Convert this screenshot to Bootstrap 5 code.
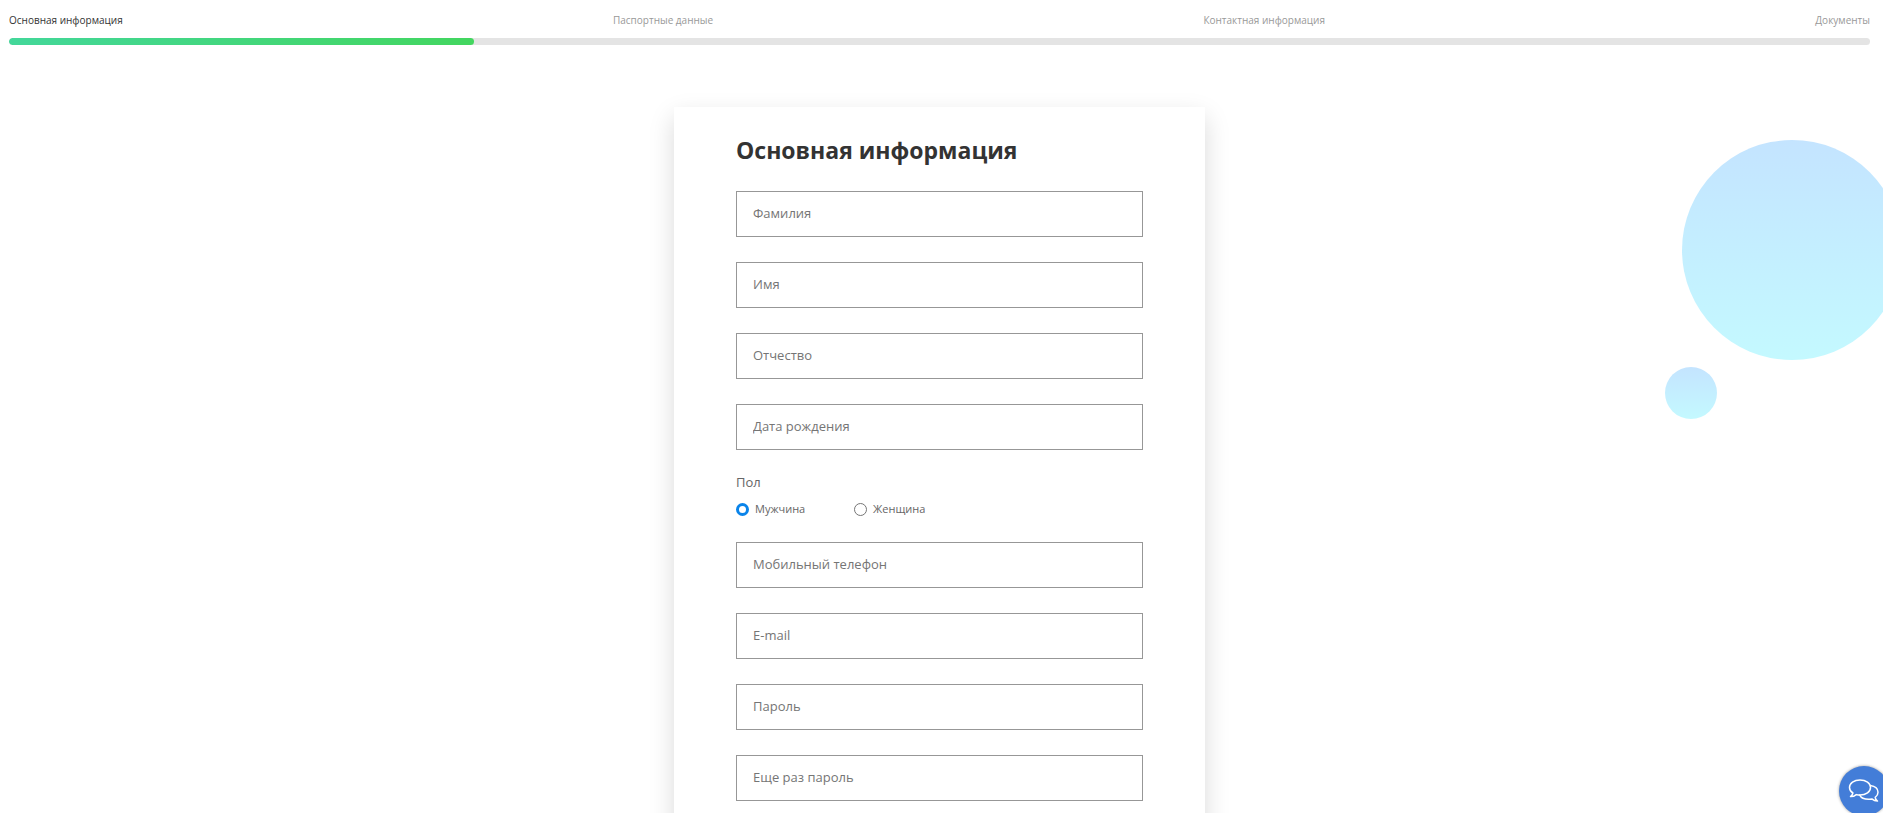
<!DOCTYPE html>
<html lang="ru">
<head>
<meta charset="utf-8">
<meta name="viewport" content="width=device-width, initial-scale=1">
<title>Основная информация</title>
<link href="https://cdn.jsdelivr.net/npm/bootstrap@5.3.0/dist/css/bootstrap.min.css" rel="stylesheet">
<style>
body { font-family: "Open Sans", sans-serif; color: #666; font-size: 13px; line-height: 18px; }
.page { padding: 13px 13px 0 9px; }
.steps { font-size: 10px; line-height: 14px; margin-bottom: 11px; color: #999; }
.steps .active { color: #333; }
.progress { --bs-progress-height: 7px; --bs-progress-bg: #e4e4e4; --bs-progress-border-radius: 4px; }
.progress-bar { border-radius: 4px; background: linear-gradient(90deg, #43d79a, #43d65f); }
.form-panel { max-width: 531px; margin-top: 62px; padding: 26px 62px 62px; background: #fff; box-shadow: 0 10px 24px rgba(0, 0, 0, .15); }
.form-panel h1 { font-size: 23px; line-height: 34px; font-weight: 700; color: #333; margin-bottom: 24px; }
.fields { display: grid; gap: 25px; }
.form-control, .form-control:focus { height: 46px; border: 1px solid #979797; border-radius: 0; padding: 0 16px 2px; font-size: 13px; color: #333; background: #fff; }
.form-control::placeholder { color: #757575; opacity: 1; }
.gender legend { font-size: 13px; line-height: 14px; margin-bottom: 12px; }
.gender .form-check { width: 118px; min-height: 0; font-size: 11px; line-height: 16px; gap: 6px; }
.gender .form-check-input { width: 13px; height: 13px; border: 1px solid #757575; background-image: none; }
.gender .form-check-input:checked { background-color: #fff; border: 3px solid #0a84ea; }
.bubble { border-radius: 50%; background: linear-gradient(#c4e4ff, #c4f9ff); }
.bubble-lg { width: 220px; height: 220px; top: 140px; right: -19px; }
.bubble-sm { width: 52px; height: 52px; top: 367px; right: 166px; }
.chat { width: 50px; height: 50px; right: -6px; bottom: -3px; background: #437dd8; box-shadow: 0 0 3px rgba(0, 0, 0, .4); }
</style>
</head>
<body>
<div class="position-relative vh-100 overflow-hidden">
  <div class="bubble bubble-lg position-absolute"></div>
  <div class="bubble bubble-sm position-absolute"></div>
  <div class="page position-relative">
    <header>
      <div class="steps d-flex justify-content-between">
        <span class="active">Основная информация</span>
        <span>Паспортные данные</span>
        <span>Контактная информация</span>
        <span>Документы</span>
      </div>
      <div class="progress" role="progressbar" aria-label="Основная информация" aria-valuenow="25" aria-valuemin="0" aria-valuemax="100">
        <div class="progress-bar w-25"></div>
      </div>
    </header>
    <main class="form-panel mx-auto">
      <h1>Основная информация</h1>
      <form class="fields">
        <input class="form-control" type="text" placeholder="Фамилия" aria-label="Фамилия">
        <input class="form-control" type="text" placeholder="Имя" aria-label="Имя">
        <input class="form-control" type="text" placeholder="Отчество" aria-label="Отчество">
        <input class="form-control" type="text" placeholder="Дата рождения" aria-label="Дата рождения">
        <fieldset class="gender">
          <legend>Пол</legend>
          <div class="d-flex">
            <div class="form-check d-flex align-items-center p-0 m-0">
              <input class="form-check-input m-0" type="radio" name="gender" id="male" checked>
              <label for="male">Мужчина</label>
            </div>
            <div class="form-check d-flex align-items-center p-0 m-0">
              <input class="form-check-input m-0" type="radio" name="gender" id="female">
              <label for="female">Женщина</label>
            </div>
          </div>
        </fieldset>
        <input class="form-control" type="tel" placeholder="Мобильный телефон" aria-label="Мобильный телефон">
        <input class="form-control" type="email" placeholder="E-mail" aria-label="E-mail">
        <input class="form-control" type="password" placeholder="Пароль" aria-label="Пароль">
        <input class="form-control" type="password" placeholder="Еще раз пароль" aria-label="Еще раз пароль">
      </form>
    </main>
  </div>
  <button class="chat btn rounded-circle border-0 p-0 position-absolute d-flex align-items-center justify-content-center" type="button" aria-label="Чат">
    <svg width="32" height="26" viewBox="0 0 32 26" fill="none" stroke="#fff" stroke-width="1.5" stroke-linejoin="round" stroke-linecap="round">
      <path d="M12 2C6 2 1.500 5.300 1.500 9.500c0 2.300 1.300 4.200 3.400 5.500-.3 1.500-1.200 2.700-2.400 3.600 2.200.1 4.200-.7 5.800-2 1.100.3 2.300.5 3.700.5 6 0 10.500-3.300 10.500-7.600S18 2 12 2Z"/>
      <path d="M22.300 7.500c4.600.6 7.700 3.300 7.700 6.800 0 2.100-1 3.800-2.800 5.100.2 1.500 1.100 2.800 2.300 3.700-2.200 0-4.200-.9-5.700-2.200-1 .2-2.100.4-3.200.4-4.200 0-7.600-1.700-8.900-4.200"/>
    </svg>
  </button>
</div>
<script src="https://cdn.jsdelivr.net/npm/bootstrap@5.3.0/dist/js/bootstrap.bundle.min.js"></script>
</body>
</html>
